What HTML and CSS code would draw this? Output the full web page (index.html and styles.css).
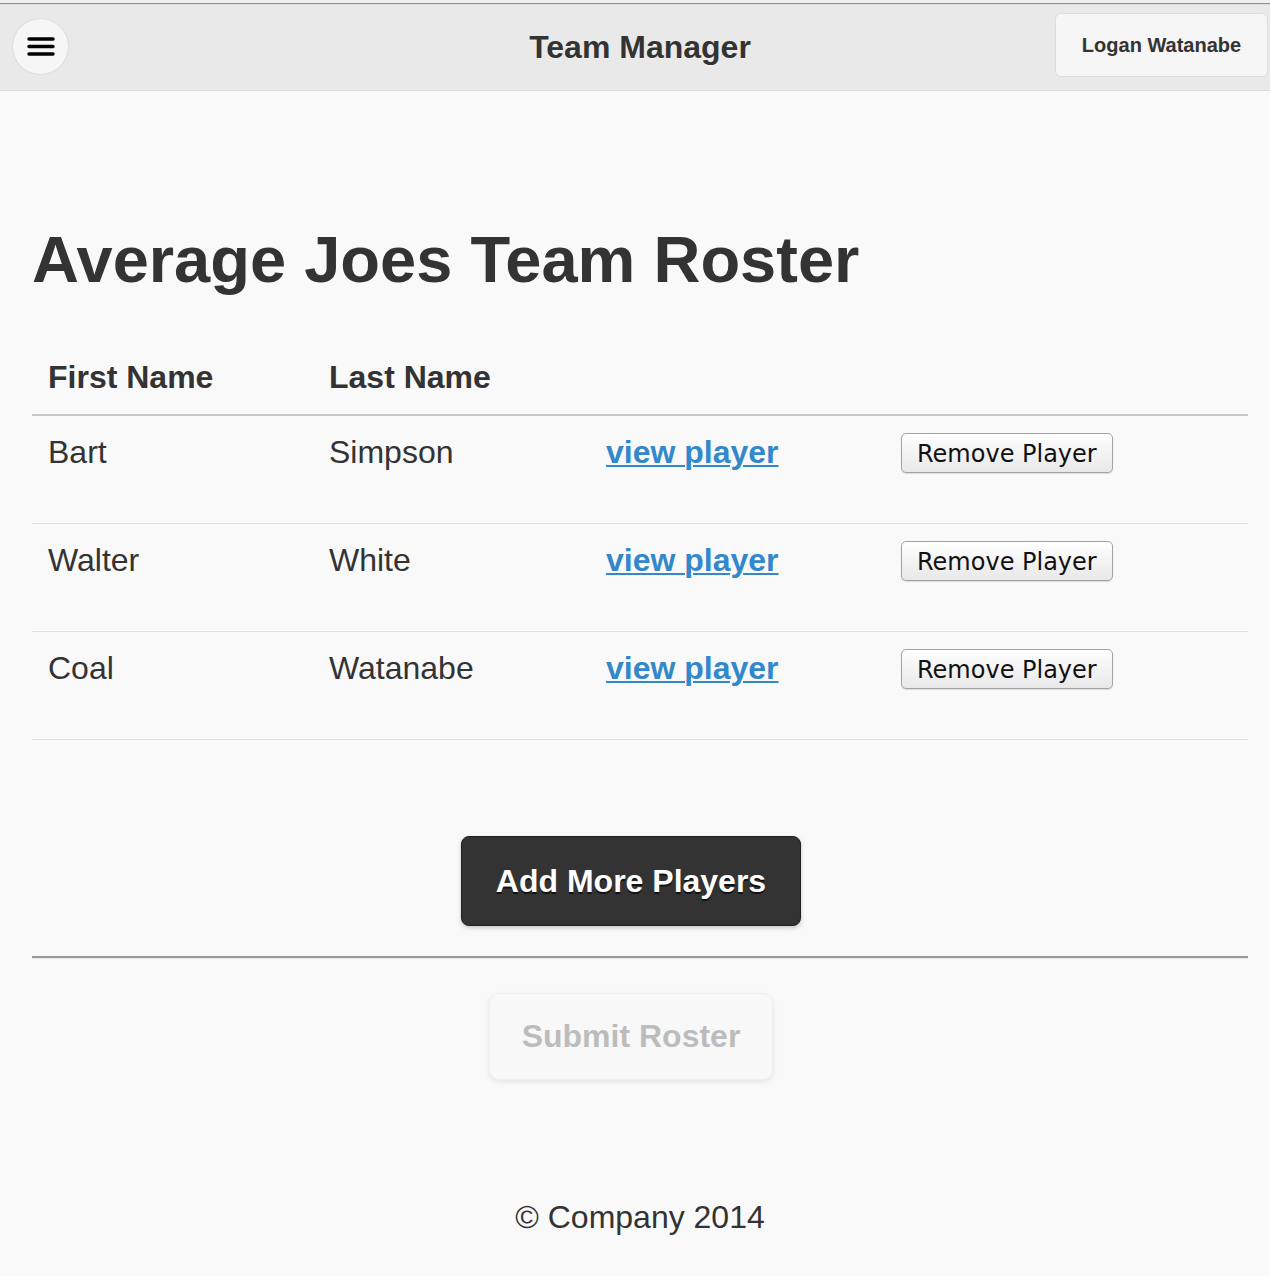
FILE: index.html
```html
<!DOCTYPE html>
<html lang="en">
<head>
<meta charset="utf-8">
<title>Team Manager</title>
<link rel="stylesheet" href="styles.css">
</head>
<body>
<div class="topstrip"></div>
<header class="header">
  <div class="hdr-left">
    <button class="menu-btn" aria-label="Menu">
      <svg width="28" height="20" viewBox="0 0 28 20"><g stroke="#000" stroke-width="3.4" stroke-linecap="round"><line x1="2" y1="2" x2="26" y2="2"/><line x1="2" y1="9.5" x2="26" y2="9.5"/><line x1="2" y1="17" x2="26" y2="17"/></g></svg>
    </button>
  </div>
  <h1 class="title">Team Manager</h1>
  <div class="hdr-right">
    <a class="user-btn" href="#">Logan Watanabe</a>
  </div>
</header>
<main class="content">
  <h2 class="page-heading">Average Joes Team Roster</h2>
  <table class="roster">
    <colgroup>
      <col class="c1"><col class="c2"><col class="c3"><col class="c4">
    </colgroup>
    <thead>
      <tr><th>First Name</th><th>Last Name</th><th></th><th></th></tr>
    </thead>
    <tbody>
      <tr><td>Bart</td><td>Simpson</td><td><a class="view" href="#">view player</a></td><td><button class="remove">Remove Player</button></td></tr>
      <tr><td>Walter</td><td>White</td><td><a class="view" href="#">view player</a></td><td><button class="remove">Remove Player</button></td></tr>
      <tr><td>Coal</td><td>Watanabe</td><td><a class="view" href="#">view player</a></td><td><button class="remove">Remove Player</button></td></tr>
    </tbody>
  </table>
  <div class="actions">
    <button class="add-btn">Add More Players</button>
  </div>
  <div class="divider"></div>
  <div class="actions submit-row">
    <button class="submit-btn" disabled>Submit Roster</button>
  </div>
</main>
<footer class="footer">© Company 2014</footer>
</body>
</html>
```
FILE: styles.css
```css
html, body {
  margin: 0;
  padding: 0;
}
body {
  background: #f9f9f9;
  font-family: "Liberation Sans", Arial, Helvetica, sans-serif;
  color: #333;
}
.topstrip {
  height: 3px;
  background: #f0f0f0;
}
.header {
  display: grid;
  grid-template-columns: 1fr auto 1fr;
  align-items: center;
  height: 86px;
  background: #e9e9e9;
  border-top: 1px solid #8c8c8c;
  border-bottom: 1px solid #dadada;
  box-shadow: inset 0 1px 0 #dcdcdc;
}
.hdr-left {
  display: flex;
  align-items: center;
  padding-left: 12px;
}
.menu-btn {
  width: 57px;
  height: 57px;
  border-radius: 50%;
  background: #f6f6f6;
  border: 1px solid #dcdcdc;
  display: flex;
  align-items: center;
  justify-content: center;
  padding: 0;
  margin-top: -1px;
}
.menu-btn svg {
  display: block;
  margin-top: 1px;
}
.title {
  margin: 0;
  padding-left: 10px;
  font-size: 32px;
  font-weight: bold;
  line-height: 86px;
  color: #333;
  text-shadow: 0 1px 0 #f3f3f3;
}
.hdr-right {
  display: flex;
  justify-content: flex-end;
  padding-right: 2px;
}
.user-btn {
  display: block;
  box-sizing: border-box;
  width: 213px;
  height: 64px;
  margin-top: -4px;
  line-height: 62px;
  text-align: center;
  background: #f6f6f6;
  border: 1px solid #dddddd;
  border-radius: 6px;
  font-size: 20px;
  font-weight: bold;
  color: #333;
  text-decoration: none;
  text-shadow: 0 1px 0 #f3f3f3;
}
.content {
  padding: 0 22px 0 32px;
}
.page-heading {
  margin: 127px 0 41px;
  font-size: 65px;
  line-height: 84px;
  font-weight: bold;
  color: #333;
}
.roster {
  width: 1216px;
  border-collapse: collapse;
  table-layout: fixed;
}
.c1 { width: 281px; }
.c2 { width: 277px; }
.c3 { width: 295px; }
.c4 { width: 363px; }
.roster th {
  text-align: left;
  font-size: 32px;
  font-weight: bold;
  line-height: 42px;
  padding: 13px 16px 16px;
  border-bottom: 2px solid #c8c8c8;
}
.roster td {
  font-size: 32px;
  line-height: 42px;
  padding: 15px 16px 50px;
  vertical-align: top;
  border-bottom: 1px solid #e0e0e0;
}
.view {
  color: #3388cc;
  font-weight: bold;
  text-decoration: underline;
  text-decoration-thickness: 2px;
  text-underline-offset: 2px;
}
.remove {
  display: block;
  margin-top: 2px;
  height: 40px;
  box-sizing: border-box;
  padding: 2px 15px 0;
  font-family: "DejaVu Sans", sans-serif;
  font-size: 24px;
  line-height: 35px;
  color: #111;
  background: linear-gradient(#ffffff, #f1f1f1 60%, #e8e8e8);
  border: 1px solid #a2a2a2;
  border-radius: 5px;
  box-shadow: 0 1px 1px rgba(0,0,0,0.12);
}
.actions {
  display: flex;
  justify-content: center;
  padding-right: 18px;
}
.add-btn {
  margin-top: 96px;
  height: 90px;
  box-sizing: border-box;
  padding: 0 34px;
  background: #333333;
  border: 1px solid #1f1f1f;
  border-radius: 8px;
  color: #fff;
  font-family: "Liberation Sans", Arial, sans-serif;
  font-size: 32px;
  font-weight: bold;
  line-height: 88px;
  text-shadow: 0 2px 0 #111;
  box-shadow: 0 2px 4px rgba(0,0,0,0.2);
}
.divider {
  margin-top: 30px;
  width: 1216px;
  border-top: 2px solid #9a9a9a;
  border-bottom: 1px solid #ececec;
}
.submit-row {
  margin-top: 34px;
}
.submit-btn {
  height: 87px;
  box-sizing: border-box;
  padding: 0 32px;
  background: #f6f6f6;
  border: 1px solid #dddddd;
  border-radius: 10px;
  color: #333;
  font-family: "Liberation Sans", Arial, sans-serif;
  font-size: 32px;
  font-weight: bold;
  line-height: 85px;
  opacity: 0.3;
  box-shadow: 0 2px 4px rgba(0,0,0,0.25);
  text-shadow: 0 1px 0 #f3f3f3;
}
.footer {
  margin-top: 116px;
  padding: 0 0 38px 10px;
  text-align: center;
  font-size: 32px;
  line-height: 42px;
  color: #333;
}
```
